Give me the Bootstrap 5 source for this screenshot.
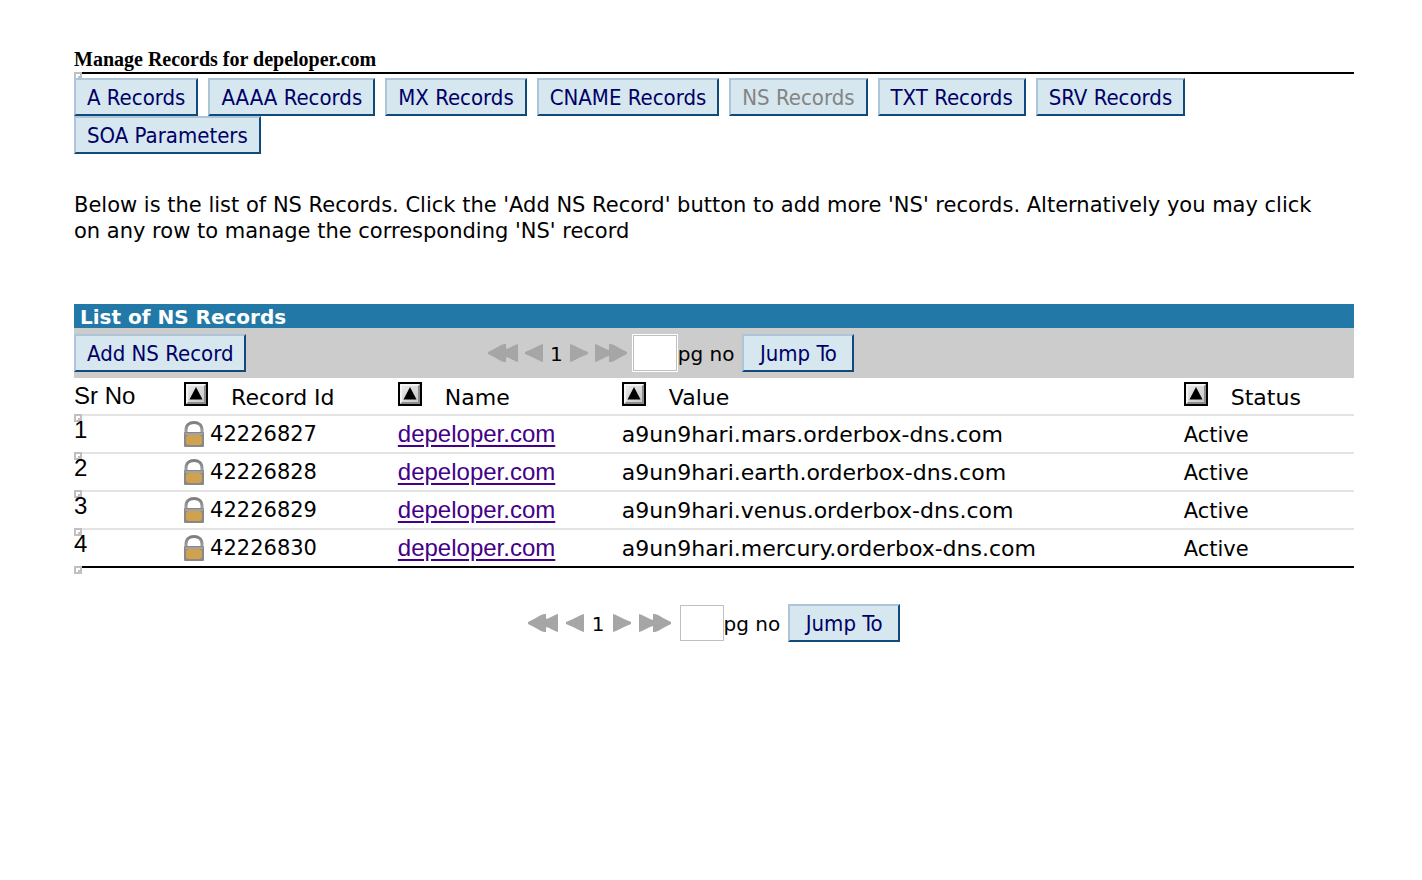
<!DOCTYPE html>
<html lang="en">
<head>
<meta charset="utf-8">
<meta name="viewport" content="width=device-width, initial-scale=1">
<title>Manage Records for depeloper.com</title>
<link href="https://cdn.jsdelivr.net/npm/bootstrap@5.3.0/dist/css/bootstrap.min.css" rel="stylesheet">
<style>
  body { font-family: Verdana, "DejaVu Sans", sans-serif; font-size: 21px; line-height: 26px; color: #000; background: #fff; }
  .page { padding: 46px 68px 40px 74px; }
  .page-title { font: bold 20px/26px "Liberation Serif", serif; border-bottom: 2px solid #000; }
  .tabs { column-gap: 10px; padding-top: 4px; }
  .btn-classic { font-family: Tahoma, "DejaVu Sans Condensed", "DejaVu Sans", sans-serif; font-size: 22px; line-height: 30px; height: 38px; padding: 3px 11px 1px; color: #006; background: #d6e7ef; border: 2px solid; border-color: #aec4d8 #104a7b #104a7b #aec4d8; border-radius: 0; white-space: nowrap; }
  .btn-classic:hover { color: #006; background: #e4f0f5; border-color: #aec4d8 #104a7b #104a7b #aec4d8; }
  .btn-classic:disabled { color: #848484; background: #d6e7ef; border-color: #aec4d8 #104a7b #104a7b #aec4d8; opacity: 1; }
  .btn-jump { min-width: 112px; }
  .intro { margin: 38px 0 60px; padding-right: 20px; }
  .list-title { font-size: 20px; line-height: 24px; font-weight: bold; color: #fff; background: #2279a7; padding: 1px 6px 0; height: 24px; margin: 0; }
  .toolbar { background: #ccc; height: 50px; display: grid; grid-template-columns: 414px 1fr; align-items: center; }
  .pager { height: 38px; font-size: 20px; }
  .pager a { display: flex; color: #a6a6a6; }
  .pager svg { fill: currentColor; }
  .pager span, .pager label { padding-top: 2px; }
  .pager-list { gap: 7px; margin-right: 5px; }
  .pager-bottom { margin-top: 36px; }
  .pager-bottom .pager-list { gap: 8px; margin-right: 9px; }
  .page-box { width: 44px; height: 36px; padding: 0 4px; border: 1px solid #c0c0c0; border-radius: 0; background: #fff; }
  .toolbar .page-box { width: 46px; height: 38px; border-color: #fff; box-shadow: inset 0 0 0 1px #c0c0c0; }
  .records { table-layout: fixed; width: 100%; border-collapse: separate; border-spacing: 0; }
  .records th, .records td { font-weight: normal; height: 38px; padding: 0; vertical-align: middle; white-space: nowrap; border-bottom: 2px solid #e4e4e4; }
  .records tbody tr:last-child td { border-bottom-color: #000; }
  .records th, .records .value { font-size: 22px; }
  .records .value, .records .status { padding-top: 2px; }
  .records .sr { position: relative; font: 24px/28px "Liberation Sans", sans-serif; vertical-align: top; }
  .records thead .sr { padding-top: 4px; }
  .records td a { display: block; font: 24px/26px "Liberation Sans", sans-serif; color: #408; text-underline-offset: 3px; }
  .marker { position: absolute; left: 0; width: 8px; height: 8px; background: #fff; border: 2px solid #c0c0c0; }
  .marker::after { content: ""; position: absolute; right: 0; bottom: 0; width: 2px; height: 2px; background: #c0c0c0; }
  .marker-up { top: -2px; }
  .marker-end { bottom: -8px; }
  .lock-cell { gap: 6px; }
  .sort { width: 24px; height: 24px; padding: 0; border: 0; margin-top: -1px; }
  .sort-head { gap: 23px; padding-top: 2px; }
  .sort-head span { padding-top: 2px; }
</style>
</head>
<body>
<svg width="0" height="0" class="position-absolute" aria-hidden="true">
  <defs>
    <linearGradient id="face" x1="0" y1="0" x2="1" y2="1"><stop offset="0" stop-color="#e8e8e8"/><stop offset="1" stop-color="#c8c8c8"/></linearGradient>
    <linearGradient id="shackle" x1="0" y1="0" x2="0" y2="1"><stop offset="0" stop-color="#7e7e7e"/><stop offset="1" stop-color="#a8a8a8"/></linearGradient>
    <symbol id="up" viewBox="0 0 24 24"><path fill="#000" d="M0 0h24v24H0z"/><path fill="#8c8c8c" d="M2 2h20v20H2z"/><path fill="#f4f4f4" d="M2 2h20l-2 2H4v16l-2 2z"/><path fill="url(#face)" d="M4 4h16v16H4z"/><path fill="#000" d="M12 5l6.500 12.500h-13z"/></symbol>
    <symbol id="lock" viewBox="0 0 20 26"><path fill="none" stroke="url(#shackle)" stroke-width="3" d="M2 14V9C2 4 5.500 1.500 10 1.500S18 4 18 9v5"/><rect width="20" height="15" y="11" rx="1" fill="#888"/><path fill="#a2a2a2" d="M1 12h18v2H1z"/><rect x="2" y="14" width="16" height="10" rx="3" fill="#d0a250"/></symbol>
    <symbol id="prev" viewBox="0 0 18 18"><path d="M0 8l7-3 8-4 3-1v18l-3-1-8-4-7-3z"/></symbol>
    <symbol id="next" viewBox="0 0 18 18"><path d="M0 0l3 1 8 4 7 3v2l-7 3-8 4-3 1z"/></symbol>
    <symbol id="first" viewBox="0 0 30 18"><path d="M0 8l6-3 7-4 3-1h2v4l1 1 8-4 3-1v18l-3-1-8-4-1 1v4h-2l-3-1-7-4-6-3z"/></symbol>
    <symbol id="last" viewBox="0 0 32 18"><path d="M0 0l3 1 8 4 3 1V0h2l3 1 7 4 6 3v2l-6 3-7 4-3 1h-2v-6l-3 1-8 4-3 1z"/></symbol>
  </defs>
</svg>
<main class="container-fluid page">
  <h1 class="page-title mb-0">Manage Records for depeloper.com</h1>
  <nav class="tabs d-flex flex-wrap position-relative" aria-label="Record types">
    <span class="marker marker-up"></span>
    <button type="button" class="btn btn-classic position-relative">A Records</button>
    <button type="button" class="btn btn-classic">AAAA Records</button>
    <button type="button" class="btn btn-classic">MX Records</button>
    <button type="button" class="btn btn-classic">CNAME Records</button>
    <button type="button" class="btn btn-classic" disabled>NS Records</button>
    <button type="button" class="btn btn-classic">TXT Records</button>
    <button type="button" class="btn btn-classic">SRV Records</button>
    <button type="button" class="btn btn-classic">SOA Parameters</button>
  </nav>
  <p class="intro">Below is the list of NS Records. Click the 'Add NS Record' button to add more 'NS' records. Alternatively you may click on any row to manage the corresponding 'NS' record</p>

  <section>
    <h2 class="list-title">List of NS Records</h2>
    <div class="toolbar">
      <div><button type="button" class="btn btn-classic">Add NS Record</button></div>
      <form class="pager d-flex align-items-center">
        <div class="pager-list d-flex align-items-center">
          <a href="#" aria-label="First page"><svg width="30" height="18"><use href="#first"/></svg></a>
          <a href="#" aria-label="Previous page"><svg width="18" height="18"><use href="#prev"/></svg></a>
          <span>1</span>
          <a href="#" aria-label="Next page"><svg width="18" height="18"><use href="#next"/></svg></a>
          <a href="#" aria-label="Last page"><svg width="32" height="18"><use href="#last"/></svg></a>
        </div>
        <input type="text" id="pageTop" class="page-box">
        <label for="pageTop" class="me-2">pg no</label>
        <button type="button" class="btn btn-classic btn-jump">Jump To</button>
      </form>
    </div>
    <table class="records">
      <colgroup><col style="width:8.6%"><col style="width:16.7%"><col style="width:17.5%"><col style="width:43.9%"><col></colgroup>
      <thead>
        <tr>
          <th class="sr" scope="col">Sr No</th>
          <th scope="col"><div class="sort-head d-flex align-items-start"><button type="button" class="sort" aria-label="Sort by record id"><svg class="d-block" width="24" height="24"><use href="#up"/></svg></button><span>Record Id</span></div></th>
          <th scope="col"><div class="sort-head d-flex align-items-start"><button type="button" class="sort" aria-label="Sort by name"><svg class="d-block" width="24" height="24"><use href="#up"/></svg></button><span>Name</span></div></th>
          <th scope="col"><div class="sort-head d-flex align-items-start"><button type="button" class="sort" aria-label="Sort by value"><svg class="d-block" width="24" height="24"><use href="#up"/></svg></button><span>Value</span></div></th>
          <th scope="col"><div class="sort-head d-flex align-items-start"><button type="button" class="sort" aria-label="Sort by status"><svg class="d-block" width="24" height="24"><use href="#up"/></svg></button><span>Status</span></div></th>
        </tr>
      </thead>
      <tbody>
        <tr><td class="sr"><span class="marker marker-up"></span><span class="position-relative">1</span></td><td><div class="lock-cell d-flex"><svg width="20" height="26"><use href="#lock"/></svg>42226827</div></td><td><a href="#">depeloper.com</a></td><td class="value">a9un9hari.mars.orderbox-dns.com</td><td class="status">Active</td></tr>
        <tr><td class="sr"><span class="marker marker-up"></span><span class="position-relative">2</span></td><td><div class="lock-cell d-flex"><svg width="20" height="26"><use href="#lock"/></svg>42226828</div></td><td><a href="#">depeloper.com</a></td><td class="value">a9un9hari.earth.orderbox-dns.com</td><td class="status">Active</td></tr>
        <tr><td class="sr"><span class="marker marker-up"></span><span class="position-relative">3</span></td><td><div class="lock-cell d-flex"><svg width="20" height="26"><use href="#lock"/></svg>42226829</div></td><td><a href="#">depeloper.com</a></td><td class="value">a9un9hari.venus.orderbox-dns.com</td><td class="status">Active</td></tr>
        <tr><td class="sr"><span class="marker marker-up"></span><span class="position-relative">4</span><span class="marker marker-end"></span></td><td><div class="lock-cell d-flex"><svg width="20" height="26"><use href="#lock"/></svg>42226830</div></td><td><a href="#">depeloper.com</a></td><td class="value">a9un9hari.mercury.orderbox-dns.com</td><td class="status">Active</td></tr>
      </tbody>
    </table>
    <form class="pager pager-bottom d-flex align-items-center justify-content-center">
      <div class="pager-list d-flex align-items-center">
        <a href="#" aria-label="First page"><svg width="30" height="18"><use href="#first"/></svg></a>
        <a href="#" aria-label="Previous page"><svg width="18" height="18"><use href="#prev"/></svg></a>
        <span>1</span>
        <a href="#" aria-label="Next page"><svg width="18" height="18"><use href="#next"/></svg></a>
        <a href="#" aria-label="Last page"><svg width="32" height="18"><use href="#last"/></svg></a>
      </div>
      <input type="text" id="pageBottom" class="page-box">
      <label for="pageBottom" class="me-2">pg no</label>
      <button type="button" class="btn btn-classic btn-jump">Jump To</button>
    </form>
  </section>
</main>
<script src="https://cdn.jsdelivr.net/npm/bootstrap@5.3.0/dist/js/bootstrap.bundle.min.js"></script>
</body>
</html>
